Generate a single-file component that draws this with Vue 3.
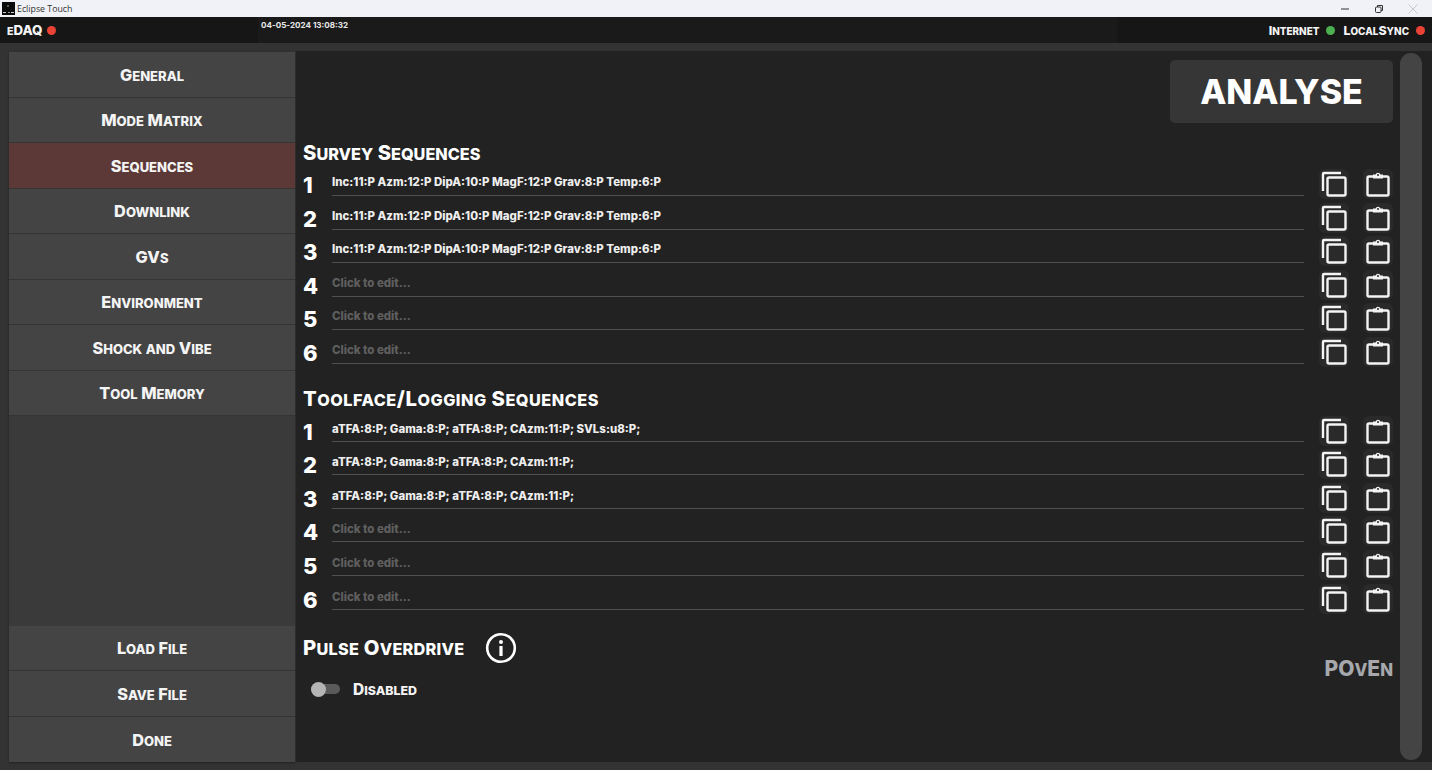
<script setup>
const survey = ['Inc:11:P Azm:12:P DipA:10:P MagF:12:P Grav:8:P Temp:6:P','Inc:11:P Azm:12:P DipA:10:P MagF:12:P Grav:8:P Temp:6:P','Inc:11:P Azm:12:P DipA:10:P MagF:12:P Grav:8:P Temp:6:P','','','']
const toolface = ['aTFA:8:P; Gama:8:P; aTFA:8:P; CAzm:11:P; SVLs:u8:P;','aTFA:8:P; Gama:8:P; aTFA:8:P; CAzm:11:P;','aTFA:8:P; Gama:8:P; aTFA:8:P; CAzm:11:P;','','','']
const sections = [{ title: 'Survey Sequences', rows: survey, cls: 'survey' }, { title: 'Toolface/Logging Sequences', rows: toolface, cls: 'tool' }]
const navTop = ['General','Mode Matrix','Sequences','Downlink','GVs','Environment','Shock and Vibe','Tool Memory']
const navBottom = ['Load File','Save File','Done']
// Splits a label into runs so that lowercase letters can be set as small capitals.
const runs = (t) => (t.match(/[a-z]+|[^a-z]+/g) || []).map((s) => ({ s, low: /[a-z]/.test(s[0]) }))
</script>

<template>
  <div class="window">
    <div class="titlebar">
      <div class="title-left">
        <svg class="appicon" width="13" height="13" viewBox="0 0 13 13"><rect width="13" height="13" fill="#0a0a0a"/><rect x="1" y="10" width="3" height="1" fill="#ccc"/><rect x="6" y="10" width="2" height="1" fill="#999"/><rect x="9" y="10" width="3" height="1" fill="#ccc"/><rect x="5" y="3" width="2" height="2" fill="#555"/></svg>
        <span>Eclipse Touch</span>
      </div>
      <div class="controls">
        <svg width="10" height="10" viewBox="0 0 10 10"><path d="M1 5h8" stroke="#333" stroke-width="1"/></svg>
        <svg width="10" height="10" viewBox="0 0 10 10" fill="none" stroke="#333"><rect x="1.5" y="3" width="5.5" height="5.5" rx="1"/><path d="M3.5 3V1.5h5v5H7"/></svg>
        <svg width="10" height="10" viewBox="0 0 10 10"><path d="M.5.5l9 9M9.500.5l-9 9" stroke="#c4c6cb" stroke-width="1"/></svg>
      </div>
    </div>
    <header class="header">
      <div class="h-left"><span class="brand"><span class="sm">e</span>DAQ</span><i class="dot red"></i></div>
      <div class="h-mid">04-05-2024 13:08:32</div>
      <div class="h-right">
        <span class="status"><span v-for="(p, k) in runs('Internet')" :key="k" :class="{ sm: p.low }">{{ p.s }}</span></span><i class="dot green"></i>
        <span class="status"><span v-for="(p, k) in runs('LocalSync')" :key="k" :class="{ sm: p.low }">{{ p.s }}</span></span><i class="dot red"></i>
      </div>
    </header>
    <div class="body">
      <nav class="sidebar">
        <div class="nav-group">
          <div v-for="n in navTop" :key="n" class="nav-item" :class="{ active: n === 'Sequences' }"><span><span v-for="(p, k) in runs(n)" :key="k" :class="{ sm: p.low }">{{ p.s }}</span></span></div>
        </div>
        <div class="nav-group">
          <div v-for="n in navBottom" :key="n" class="nav-item"><span><span v-for="(p, k) in runs(n)" :key="k" :class="{ sm: p.low }">{{ p.s }}</span></span></div>
        </div>
      </nav>
      <main class="panel">
        <div class="content">
          <div class="top"><button class="analyse">ANALYSE</button></div>
          <section v-for="s in sections" :key="s.title" class="section" :class="s.cls">
            <h2 class="sec-title"><span v-for="(p, k) in runs(s.title)" :key="k" :class="{ sm: p.low }">{{ p.s }}</span></h2>
            <div v-for="(r, i) in s.rows" :key="i" class="row">
              <span class="num">{{ i + 1 }}</span>
              <div class="field" :class="{ empty: !r }">{{ r || 'Click to edit...' }}</div>
              <div class="icons">
                <span class="icon-btn">
                  <svg width="26" height="26" viewBox="0 0 26 26" fill="none" stroke="#f4f4f4" stroke-width="2.400"><path d="M20 2H3a1 1 0 0 0-1 1v17"/><rect x="6.500" y="6.500" width="18" height="18" rx="1.500"/></svg>
                </span>
                <span class="icon-btn clip">
                  <svg width="24" height="26" viewBox="0 0 24 26" fill="none" stroke="#f4f4f4" stroke-width="2.400"><path d="M7 5.500H3A1.500 1.500 0 0 0 1.500 7v16A1.500 1.500 0 0 0 3 24.500h18a1.500 1.500 0 0 0 1.500-1.500V7A1.500 1.500 0 0 0 21 5.500h-4"/><path d="M7 7.500V3.500h2.600a2.500 2.500 0 0 1 4.800 0H17v4z" fill="#f4f4f4" stroke="none"/><circle cx="12" cy="4" r="1" fill="#2a2a2a" stroke="none"/></svg>
                </span>
              </div>
            </div>
          </section>
          <section class="pulse">
            <div class="pulse-head">
              <h2 class="sec-title"><span v-for="(p, k) in runs('Pulse Overdrive')" :key="k" :class="{ sm: p.low }">{{ p.s }}</span></h2>
              <svg class="info" width="32" height="32" viewBox="0 0 32 32"><circle cx="16" cy="16" r="13.800" fill="none" stroke="#fff" stroke-width="2.600"/><circle cx="16" cy="10" r="2" fill="#fff"/><rect x="14.400" y="14" width="3.200" height="10" fill="#fff"/></svg>
              <span class="poven"><span v-for="(p, k) in runs('POvEn')" :key="k" :class="{ sm: p.low }">{{ p.s }}</span></span>
            </div>
            <div class="toggle-row">
              <span class="toggle"><i class="knob"></i></span>
              <span class="toggle-label"><span v-for="(p, k) in runs('Disabled')" :key="k" :class="{ sm: p.low }">{{ p.s }}</span></span>
            </div>
          </section>
        </div>
        <div class="scrollbar"></div>
      </main>
    </div>
  </div>
</template>

<style>
html, body { margin: 0; background: #333; overflow: hidden; }
</style>

<style scoped>
.window { width: 1432px; height: 770px; display: flex; flex-direction: column; background: #333; font-family: "Inter", "Liberation Sans", sans-serif; color: #f4f4f4; overflow: hidden; }
.sm { font-size: .8em; text-transform: uppercase; }
.titlebar { height: 17px; flex: none; background: #f0f2f7; display: flex; justify-content: space-between; align-items: center; color: #333; }
.title-left { display: flex; align-items: center; gap: 2px; padding-left: 2px; font: 8.800px "Open Sans", sans-serif; }
.appicon { display: block; }
.controls { display: flex; gap: 24px; padding-right: 14px; }
.controls svg { display: block; }
.header { height: 26px; flex: none; display: flex; background: #161616; }
.h-left { width: 258px; display: flex; align-items: center; padding-left: 7px; box-sizing: border-box; gap: 4px; }
.brand { font-weight: 800; font-size: 13.300px; }
.h-mid { width: 859px; background: #1a1a1a; font: 700 8.100px "Inter", sans-serif; padding: 3px 0 0 3px; box-sizing: border-box; color: #e8e8e8; }
.h-right { flex: 1; display: flex; align-items: center; justify-content: flex-end; padding-right: 7px; background: #161616; }
.status { font-weight: 800; font-size: 12.400px; margin-left: 8px; margin-right: 7px; }
.dot { width: 9px; height: 9px; border-radius: 50%; display: block; }
.red { background: #ea4335; }
.green { background: #4caf50; }
.body { flex: 1; display: flex; padding: 8px 0 8px 9px; min-height: 0; }
.sidebar { width: 286px; margin-top: 1px; flex: none; display: flex; flex-direction: column; justify-content: space-between; background: #3a3a3a; box-shadow: 0 1px 2px #222; }
.nav-item { height: 45.500px; box-sizing: border-box; display: flex; align-items: center; justify-content: center; background: #444; border-bottom: 1px solid #353535; font-weight: 800; font-size: 16.300px; padding-top: 1px; }
.nav-group:last-child .nav-item:last-child { border-bottom: none; }
.nav-item.active { background: #5c3937; }
.panel { margin-left: 1px; flex: 1; min-width: 0; background: #222; display: flex; padding-right: 10px; }
.content { flex: 1; min-width: 0; padding: 9px 7px 0 7px; }
.scrollbar { width: 22px; flex: none; margin: 2px 0; border-radius: 11px; background: #444; }
.top { height: 63px; display: flex; justify-content: flex-end; }
.analyse { width: 223px; height: 63px; border: none; border-radius: 5px; background: #363636; color: #fff; font: 800 34px "Inter", sans-serif; padding: 0; }
.section { display: block; }
.survey { margin-top: 17px; }
.tool { margin-top: 18px; }
.sec-title { margin: 0; height: 26px; line-height: 26px; font-weight: 800; font-size: 20.300px; color: #fff; }
.tool .sec-title { letter-spacing: .5px; margin-bottom: 1px; }
.pulse .sec-title { letter-spacing: .25px; }
.row { height: 33.600px; display: flex; align-items: stretch; box-sizing: border-box; position: relative; }
.num { width: 29px; flex: none; font: 800 22px/24px "Inter", sans-serif; color: #fff; padding-top: 7px; box-sizing: border-box; }
.field { width: 972px; flex: none; box-sizing: border-box; border-bottom: 1px solid #505050; font: 800 11.450px/14px "Inter", sans-serif; color: #eee; padding-top: 9px; height: 29px; }
.survey .field { height: 30px; }
.field.empty { color: #5f5f5f; }
.icons { display: flex; gap: 14px; margin-left: 15px; margin-top: 3px; }
.icon-btn { width: 30px; height: 30px; border-radius: 6px; background: #2a2a2a; display: flex; align-items: center; justify-content: center; }
.pulse { margin-top: 18px; }
.pulse-head { display: flex; align-items: center; height: 32px; }
.pulse-head .sec-title { height: 26px; }
.info { margin-left: 21px; }
.poven { margin-left: auto; font-weight: 800; font-size: 21px; color: #a6a8ab; padding-top: 40px; }
.toggle-row { display: flex; align-items: center; margin-top: 14px; padding-left: 8px; }
.toggle { width: 29px; height: 10px; border-radius: 5px; background: #5a5a5a; position: relative; display: block; }
.knob { position: absolute; left: 0; top: -2px; width: 15px; height: 15px; border-radius: 50%; background: #b4b4b4; }
.toggle-label { margin-left: 13px; font-weight: 800; font-size: 15.500px; padding-top: 2px; }
</style>
